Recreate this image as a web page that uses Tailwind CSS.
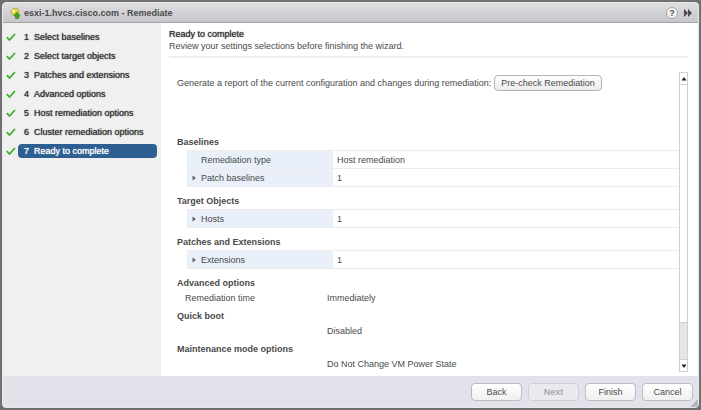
<!DOCTYPE html>
<html lang="en">
<head>
    <meta charset="UTF-8">
    <meta name="viewport" content="width=device-width, initial-scale=1.0">
    <title>esxi-1.hvcs.cisco.com - Remediate</title>
    <script src="https://cdn.jsdelivr.net/npm/@tailwindcss/browser@4"></script>
</head>
<body class="bg-[#707070] font-['Liberation_Sans',Arial,sans-serif] text-[9px] leading-3 text-[#4a4a4a]">
    <div class="flex min-h-screen p-0.5">
        <!-- Wizard window -->
        <div class="relative flex grow flex-col overflow-hidden rounded border border-[#e8e8ea] bg-white">
            <!-- Title bar -->
            <header class="flex h-5 items-center border-b border-[#a3a3a8] bg-linear-to-b from-[#dfdfe2] to-[#c6c6cb] pr-1 pl-1.5">
                <svg class="size-3" viewBox="0 0 12 12" aria-hidden="true">
                    <path d="M4.5 1.500 8 1l2 3-.5 3.500-4 1L2 6.500 2 3.500z" fill="#e3d52c" stroke="#a9a06a" stroke-width=".8"/>
                    <path d="M3 3.500 5.500 2.500 6 5 4 6z" fill="#fbf8c0"/>
                    <path d="M6.500 11.500V9H4.800L8 5.200 11.200 9H9.800v2.500z" fill="#43a51c" stroke="#2c7a12" stroke-width=".6"/>
                </svg>
                <h1 class="ml-[3px] grow font-bold">esxi-1.hvcs.cisco.com - Remediate</h1>
                <button class="flex size-3 items-center justify-center rounded-full border border-[#a4a4a8] bg-[#f6f6f6] font-bold" aria-label="Help">?</button>
                <button class="ml-1" aria-label="Collapse">
                    <svg class="size-3" viewBox="0 0 12 12" fill="#4b4b4f">
                        <path d="M2 2 6 6 2 10zM6 2l4 4-4 4z"/>
                    </svg>
                </button>
            </header>

            <div class="flex grow">
                <!-- Steps -->
                <nav class="w-[158px] shrink-0 bg-[#f0f0f0] pt-1 pr-1 pl-[3px] text-[#333] [text-shadow:0_0_1px_currentColor]">
                    <ol>
                        <li class="flex h-[19px] items-center">
                            <svg class="size-2.5" viewBox="0 0 10 10" fill="none" stroke="#3fae2a" stroke-width="1.800"><path d="M.8 5.200 3.500 8 9 2"/></svg>
                            <a href="#" class="ml-0.5 flex h-3.5 grow items-center gap-[5px] rounded-sm pl-1.5"><span>1</span>Select baselines</a>
                        </li>
                        <li class="flex h-[19px] items-center">
                            <svg class="size-2.5" viewBox="0 0 10 10" fill="none" stroke="#3fae2a" stroke-width="1.800"><path d="M.8 5.200 3.500 8 9 2"/></svg>
                            <a href="#" class="ml-0.5 flex h-3.5 grow items-center gap-[5px] rounded-sm pl-1.5"><span>2</span>Select target objects</a>
                        </li>
                        <li class="flex h-[19px] items-center">
                            <svg class="size-2.5" viewBox="0 0 10 10" fill="none" stroke="#3fae2a" stroke-width="1.800"><path d="M.8 5.200 3.500 8 9 2"/></svg>
                            <a href="#" class="ml-0.5 flex h-3.5 grow items-center gap-[5px] rounded-sm pl-1.5"><span>3</span>Patches and extensions</a>
                        </li>
                        <li class="flex h-[19px] items-center">
                            <svg class="size-2.5" viewBox="0 0 10 10" fill="none" stroke="#3fae2a" stroke-width="1.800"><path d="M.8 5.200 3.500 8 9 2"/></svg>
                            <a href="#" class="ml-0.5 flex h-3.5 grow items-center gap-[5px] rounded-sm pl-1.5"><span>4</span>Advanced options</a>
                        </li>
                        <li class="flex h-[19px] items-center">
                            <svg class="size-2.5" viewBox="0 0 10 10" fill="none" stroke="#3fae2a" stroke-width="1.800"><path d="M.8 5.200 3.500 8 9 2"/></svg>
                            <a href="#" class="ml-0.5 flex h-3.5 grow items-center gap-[5px] rounded-sm pl-1.5"><span>5</span>Host remediation options</a>
                        </li>
                        <li class="flex h-[19px] items-center">
                            <svg class="size-2.5" viewBox="0 0 10 10" fill="none" stroke="#3fae2a" stroke-width="1.800"><path d="M.8 5.200 3.500 8 9 2"/></svg>
                            <a href="#" class="ml-0.5 flex h-3.5 grow items-center gap-[5px] rounded-sm pl-1.5"><span>6</span>Cluster remediation options</a>
                        </li>
                        <li class="flex h-[19px] items-center">
                            <svg class="size-2.5" viewBox="0 0 10 10" fill="none" stroke="#3fae2a" stroke-width="1.800"><path d="M.8 5.200 3.500 8 9 2"/></svg>
                            <a href="#" aria-current="step" class="ml-0.5 flex h-3.5 grow items-center gap-[5px] rounded-sm bg-[#2d5f92] pl-1.5 text-white [text-shadow:0_0_1px_currentColor]"><span>7</span>Ready to complete</a>
                        </li>
                    </ol>
                </nav>

                <!-- Step content -->
                <main class="flex grow flex-col pt-[5px] pr-2.5 pb-1 pl-2">
                    <div class="border-b-2 border-[#efefef] pb-1">
                        <h2 class="text-[#333] [text-shadow:0_0_1px_currentColor]">Ready to complete</h2>
                        <p>Review your settings selections before finishing the wizard.</p>
                    </div>

                    <div class="mt-3.5 flex grow">
                        <div class="grow pl-2">
                            <div class="flex items-center gap-[3px] pt-[3px]">
                                <p>Generate a report of the current configuration and changes during remediation:</p>
                                <button class="h-4 rounded-sm border border-[#b4b4b4] bg-linear-to-b from-white to-[#ececec] px-1.5">Pre-check Remediation</button>
                            </div>

                            <h3 class="mt-[45px] font-bold">Baselines</h3>
                            <table class="mt-0.5 ml-2.5 w-[calc(100%-10px)] border-collapse">
                                <tr class="h-[18px] border-y border-[#ececec]">
                                    <th class="w-[146px] bg-[#e9f0f9] pl-3.5 text-left font-normal">Remediation type</th>
                                    <td class="pl-1">Host remediation</td>
                                </tr>
                                <tr class="h-[18px] border-y border-[#ececec]">
                                    <th class="bg-[#e9f0f9] pl-1 text-left font-normal">
                                        <span class="flex items-center gap-1"><svg class="size-1.5" viewBox="0 0 6 6" fill="#666"><path d="M1.500.5 5 3 1.500 5.500z"/></svg>Patch baselines</span>
                                    </th>
                                    <td class="pl-1">1</td>
                                </tr>
                            </table>

                            <h3 class="mt-2 font-bold">Target Objects</h3>
                            <table class="mt-0.5 ml-2.5 w-[calc(100%-10px)] border-collapse">
                                <tr class="h-[18px] border-y border-[#ececec]">
                                    <th class="w-[146px] bg-[#e9f0f9] pl-1 text-left font-normal">
                                        <span class="flex items-center gap-1"><svg class="size-1.5" viewBox="0 0 6 6" fill="#666"><path d="M1.500.5 5 3 1.500 5.500z"/></svg>Hosts</span>
                                    </th>
                                    <td class="pl-1">1</td>
                                </tr>
                            </table>

                            <h3 class="mt-2 font-bold">Patches and Extensions</h3>
                            <table class="mt-0.5 ml-2.5 w-[calc(100%-10px)] border-collapse">
                                <tr class="h-[18px] border-y border-[#ececec]">
                                    <th class="w-[146px] bg-[#e9f0f9] pl-1 text-left font-normal">
                                        <span class="flex items-center gap-1"><svg class="size-1.5" viewBox="0 0 6 6" fill="#666"><path d="M1.500.5 5 3 1.500 5.500z"/></svg>Extensions</span>
                                    </th>
                                    <td class="pl-1">1</td>
                                </tr>
                            </table>

                            <h3 class="mt-2 font-bold">Advanced options</h3>
                            <div class="mt-[3px] flex pl-2">
                                <span class="w-[142px]">Remediation time</span>
                                <span>Immediately</span>
                            </div>
                            <h3 class="mt-1.5 font-bold">Quick boot</h3>
                            <p class="mt-[3px] pl-[150px]">Disabled</p>
                            <h3 class="mt-1.5 font-bold">Maintenance mode options</h3>
                            <p class="mt-[3px] pl-[150px]">Do Not Change VM Power State</p>
                        </div>

                        <!-- Scrollbar -->
                        <div class="flex w-[9px] shrink-0 flex-col border border-[#cfcfcf] bg-[#e6e6e6]" aria-hidden="true">
                            <div class="flex h-3 items-center justify-center border-b border-[#cfcfcf] bg-white">
                                <svg class="h-1 w-1.5" viewBox="0 0 6 4"><path d="M3 0 5.500 3.500H.5z" fill="#222"/></svg>
                            </div>
                            <div class="grow border-b border-[#cfcfcf] bg-white"></div>
                            <div class="h-9"></div>
                            <div class="flex h-3 items-center justify-center border-t border-[#cfcfcf] bg-white">
                                <svg class="h-1 w-1.5" viewBox="0 0 6 4"><path d="M3 4 5.500.5H.5z" fill="#222"/></svg>
                            </div>
                        </div>
                    </div>
                </main>
            </div>

            <!-- Buttons -->
            <footer class="flex h-[31px] items-center justify-end gap-1.5 bg-[#e1e2ea] pr-[5px]">
                <button class="h-[18px] w-[51px] rounded-sm border border-[#bcbcc2] bg-linear-to-b from-white to-[#f0f0f2]">Back</button>
                <button class="h-[18px] w-[51px] rounded-sm border border-[#cfcfd6] bg-[#e9e9ef] font-bold text-[#a9abb3]" disabled>Next</button>
                <button class="h-[18px] w-[51px] rounded-sm border border-[#bcbcc2] bg-linear-to-b from-white to-[#f0f0f2]">Finish</button>
                <button class="h-[18px] w-[51px] rounded-sm border border-[#bcbcc2] bg-linear-to-b from-white to-[#f0f0f2]">Cancel</button>
            </footer>
            <svg class="absolute right-0 bottom-0 size-2" viewBox="0 0 8 8" aria-hidden="true"><path d="M8 0v8H0z" fill="#b5b6bd"/></svg>
        </div>
    </div>
</body>
</html>
